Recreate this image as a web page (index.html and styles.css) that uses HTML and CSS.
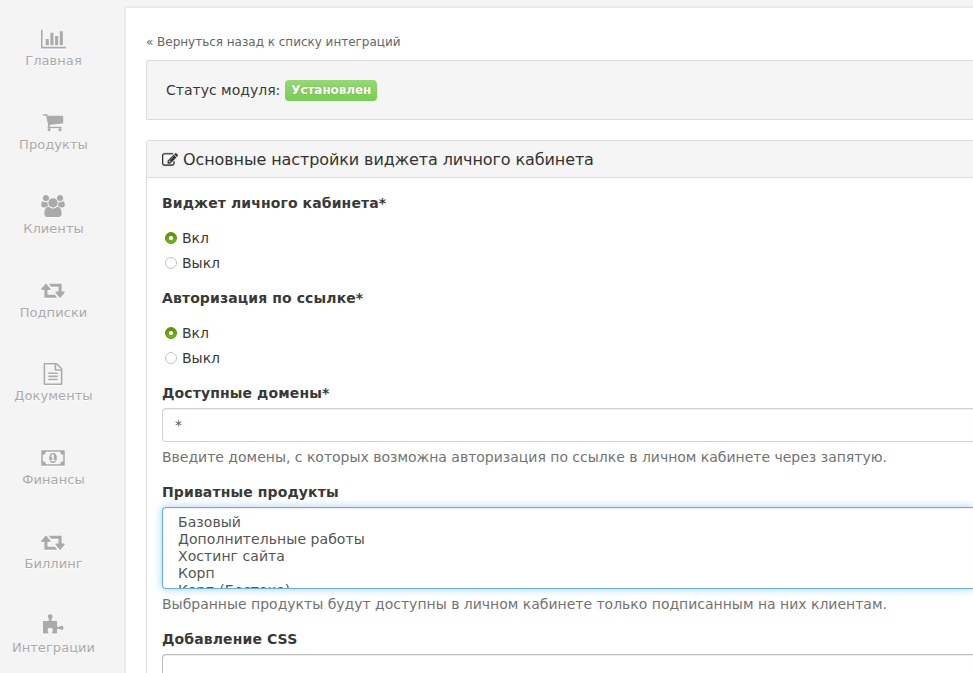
FILE: index.html
```
<!DOCTYPE html>
<html lang="ru">
<head>
<meta charset="utf-8">
<title>Настройки виджета</title>
<link rel="stylesheet" href="styles.css">
</head>
<body>
<nav class="sidebar">
  <a class="item"><svg class="ico ico-chart" viewBox="0 0 2048 1792"><path d="M640 896v512h-256v-512h256zm384-512v1024h-256v-1024h256zm1024 1152v128h-2048v-1536h128v1408h1920zm-640-896v768h-256v-768h256zm384-384v1152h-256v-1152h256z"/></svg><span>Главная</span></a>
  <a class="item"><svg class="ico" viewBox="0 0 1792 1792"><path d="M704 1536q0 52-38 90t-90 38-90-38-38-90 38-90 90-38 90 38 38 90zm896 0q0 52-38 90t-90 38-90-38-38-90 38-90 90-38 90 38 38 90zm128-1088v512q0 24-16.5 42.5t-40.5 21.5l-1044 122q13 60 13 70 0 16-24 64h920q26 0 45 19t19 45-19 45-45 19h-1024q-26 0-45-19t-19-45q0-11 8-31.5t16-36 21.5-40 15.5-29.5l-177-823h-204q-26 0-45-19t-19-45 19-45 45-19h256q16 0 28.5 6.5t19.5 15.5 13 24.5 8 26 5.5 29.5 4.5 26h1201q26 0 45 19t19 45z"/></svg><span>Продукты</span></a>
  <a class="item"><svg class="ico ico-wide" viewBox="64 0 1920 1792"><path d="M657 896q-162 5-265 128h-134q-82 0-138-40.5t-56-118.5q0-353 124-353 6 0 43.5 21t97.5 42.5 119 21.5q67 0 133-23-5 37-5 66 0 139 81 256zm1071 637q0 120-73 189.5t-194 69.5h-874q-121 0-194-69.5t-73-189.5q0-53 3.5-103.5t14-109 26.5-108.5 43-97.5 62-81 85.5-53.500 111.500-20q10 0 43 21.500t73 48 107 48 135 21.500 135-21.500 107-48 73-48 43-21.500q61 0 111.500 20t85.500 53.500 62 81 43 97.500 26.500 108.500 14 109 3.500 103.500zm-1024-1277q0 106-75 181t-181 75-181-75-75-181 75-181 181-75 181 75 75 181zm704 384q0 159-112.500 271.500t-271.500 112.500-271.500-112.500-112.500-271.500 112.500-271.500 271.500-112.500 271.500 112.500 112.500 271.500zm576 225q0 78-56 118.500t-138 40.500h-134q-103-123-265-128 81-117 81-256 0-29-5-66 66 23 133 23 59 0 119-21.500t97.500-42.500 43.500-21q124 0 124 353zm-128-609q0 106-75 181t-181 75-181-75-75-181 75-181 181-75 181 75 75 181z"/></svg><span>Клиенты</span></a>
  <a class="item"><svg class="ico ico-wide" viewBox="64 0 1920 1792"><path id="retweet" d="M1344 1504q0 13-9.5 22.5t-22.5 9.5h-960q-8 0-13.5-2t-9-7-5.5-8-3-11.5-1-11.5v-600h-192q-26 0-45-19t-19-45q0-24 15-41l320-384q19-22 49-22t49 22l320 384q15 17 15 41 0 26-19 45t-45 19h-192v384h576q16 0 25 11l160 192q7 10 7 21zm640-416q0 24-15 41l-320 384q-20 23-49 23t-49-23l-320-384q-15-17-15-41 0-26 19-45t45-19h192v-384h-576q-16 0-25-12l-160-192q-7-9-7-20 0-13 9.5-22.5t22.5-9.5h960q8 0 13.5 2t9 7 5.5 8 3 11.5 1 11.5v600h192q26 0 45 19t19 45z"/></svg><span>Подписки</span></a>
  <a class="item"><svg class="ico" viewBox="0 0 1792 1792"><path d="M1596 380q28 28 48 76t20 88v1152q0 40-28 68t-68 28h-1344q-40 0-68-28t-28-68v-1600q0-40 28-68t68-28h896q40 0 88 20t76 48zm-444-244v376h376q-10-29-22-41l-313-313q-12-12-41-22zm384 1528v-1024h-416q-40 0-68-28t-28-68v-416h-768v1536h1280zm-1024-864q0-14 9-23t23-9h704q14 0 23 9t9 23v64q0 14-9 23t-23 9h-704q-14 0-23-9t-9-23v-64zm736 224q14 0 23 9t9 23v64q0 14-9 23t-23 9h-704q-14 0-23-9t-9-23v-64q0-14 9-23t23-9h704zm0 256q14 0 23 9t9 23v64q0 14-9 23t-23 9h-704q-14 0-23-9t-9-23v-64q0-14 9-23t23-9h704z"/></svg><span>Документы</span></a>
  <a class="item"><svg class="ico ico-wide" viewBox="-64 0 1920 1792"><path d="M704 1152h384v-96h-128v-448h-114l-148 137 77 80q42-37 55-57h2v288h-128v96zm512-256q0 70-21 142t-59.500 134-101.500 101-138 39-138-39-101.500-101-59.500-134-21-142 21-142 59.500-134 101.500-101 138-39 138 39 101.500 101 59.500 134 21 142zm512 256v-512q-106 0-181-75t-75-181h-1152q0 106-75 181t-181 75v512q106 0 181 75t75 181h1152q0-106 75-181t181-75zm128-832v1152q0 26-19 45t-45 19h-1792q-26 0-45-19t-19-45v-1152q0-26 19-45t45-19h1792q26 0 45 19t19 45z"/></svg><span>Финансы</span></a>
  <a class="item"><svg class="ico ico-wide" viewBox="64 0 1920 1792"><use href="#retweet"/></svg><span>Биллинг</span></a>
  <a class="item"><svg class="ico" viewBox="0 1 22 22"><path d="M1 8H6.700V7.200Q7.300 5.900 6.200 4.700 5.400 3.600 6 2.500 6.700 1.300 8.200 1.300T10.400 2.500Q11 3.600 10.200 4.700 9.100 5.900 9.700 7.200V8H15V12.700Q15.300 14 16.700 13.900 17.600 13.800 18.400 13.100 19.500 12.400 20.500 13 21.600 13.600 21.600 14.900T20.500 16.700Q19.500 17.200 18.400 16.600 17.600 15.900 16.700 15.800 15.300 15.700 15 17V20.500H10.300Q9.700 19.500 10.500 18.300 11.300 17 10.400 15.800 9.700 15 8.200 15T6 15.800Q5.100 17 5.900 18.300 6.700 19.500 6 20.500H1Z"/></svg><span>Интеграции</span></a>
</nav>
<main class="page">
  <div class="content">
    <a class="back">« Вернуться назад к списку интеграций</a>
    <section class="status">Статус модуля: <b class="badge">Установлен</b></section>
    <section class="panel">
      <h1 class="title"><svg class="edit" viewBox="0 0 1792 1792"><path d="M888 1184l116-116-152-152-116 116v56h96v96h56zm440-720q-16-16-33 1l-350 350q-17 17-1 33t33-1l350-350q17-17 1-33zm80 594v190q0 119-84.500 203.500t-203.500 84.500h-832q-119 0-203.500-84.500t-84.500-203.500v-832q0-119 84.500-203.500t203.500-84.500h832q63 0 117 25 15 7 18 23 3 17-9 29l-49 49q-14 14-32 8-23-6-45-6h-832q-66 0-113 47t-47 113v832q0 66 47 113t113 47h832q66 0 113-47t47-113v-126q0-13 9-22l64-64q15-15 35-7t20 29zm-96-738l288 288-672 672h-288v-288zm444 132l-92 92-288-288 92-92q28-28 68-28t68 28l152 152q28 28 28 68t-28 68z"/></svg>Основные настройки виджета личного кабинета</h1>
      <div class="form">
        <div class="group">
          <div class="label">Виджет личного кабинета*</div>
          <div class="radios">
            <label class="radio"><i class="dot on"></i>Вкл</label>
            <label class="radio"><i class="dot"></i>Выкл</label>
          </div>
        </div>
        <div class="group">
          <div class="label">Авторизация по ссылке*</div>
          <div class="radios">
            <label class="radio"><i class="dot on"></i>Вкл</label>
            <label class="radio"><i class="dot"></i>Выкл</label>
          </div>
        </div>
        <div class="group">
          <div class="label">Доступные домены*</div>
          <div class="field">*</div>
          <div class="help">Введите домены, с которых возможна авторизация по ссылке в личном кабинете через запятую.</div>
        </div>
        <div class="group">
          <div class="label">Приватные продукты</div>
          <div class="list">
            <div>Базовый</div>
            <div>Дополнительные работы</div>
            <div>Хостинг сайта</div>
            <div>Корп</div>
            <div>Корп (Бостоко)</div>
          </div>
          <div class="help">Выбранные продукты будут доступны в личном кабинете только подписанным на них клиентам.</div>
        </div>
        <div class="group">
          <div class="label">Добавление CSS</div>
          <div class="field area"></div>
        </div>
      </div>
    </section>
  </div>
</main>
</body>
</html>
```
FILE: styles.css
```
* { box-sizing: border-box; }
body {
  margin: 0;
  height: 673px;
  overflow: hidden;
  display: flex;
  background: #f4f4f4;
  color: #393939;
  font: 14px/20px "DejaVu Sans", sans-serif;
}
.sidebar {
  flex: none;
  width: 124px;
  height: 673px;
  overflow: hidden;
  padding-top: 28px;
}
.item {
  display: flex;
  flex-direction: column;
  align-items: center;
  width: 107px;
  height: 83.85px;
  color: #aaa;
  font-size: 13px;
  line-height: 20px;
  letter-spacing: .06px;
  text-shadow: 0 1px 0 #fff;
}
.item span { margin-top: 1px; }
.ico {
  width: 22px;
  height: 22px;
  margin-right: 2px;
  fill: #aaa;
  filter: drop-shadow(0 1px 0 #fff);
}
.ico-wide { width: 24px; }
.ico-chart { width: 25px; margin-right: 0; }
.item:nth-child(n+2) .ico { margin-top: -1px; margin-bottom: 1px; }
.item:nth-child(5) .ico,
.item:nth-child(6) .ico,
.item:nth-child(7) .ico { margin-top: 0; margin-bottom: 0; }
.page {
  flex: 1;
  min-width: 0;
  height: 667px;
  overflow: hidden;
  margin-top: 6px;
  padding: 24px 0 0 20px;
  background: #fff;
  border: 2px solid #ebebeb;
  border-width: 2px 0 0 2px;
}
.back {
  display: block;
  height: 28px;
  font-size: 12px;
  letter-spacing: -.02px;
  color: #666;
}
.status {
  display: flex;
  height: 60px;
  padding: 19px;
  background: #f5f5f5;
  border: 1px solid #dcdcdc;
  border-right: 0;
  border-radius: 2px 0 0 2px;
}
.badge {
  height: 21px;
  margin-left: 5px;
  padding: 0 6px;
  border-radius: 4px;
  background: linear-gradient(#96d877, #78cd51);
  color: #fff;
  font-size: 12px;
  line-height: 21px;
  letter-spacing: -.08px;
  text-shadow: 0 0 2px rgba(0, 0, 0, .2);
}
.panel {
  margin-top: 20px;
  border: 1px solid #ddd;
  border-right: 0;
  border-radius: 4px 0 0 4px;
}
.title {
  display: flex;
  align-items: center;
  height: 37px;
  margin: 0;
  padding: 1px 15px 0;
  background: #f5f5f5;
  border-bottom: 1px solid #ddd;
  border-radius: 4px 0 0 0;
  font-size: 16px;
  font-weight: 400;
  letter-spacing: -.1px;
  white-space: nowrap;
  color: #333;
}
.edit {
  width: 16px;
  height: 16px;
  margin-right: 5px;
  fill: #333;
  stroke: #333;
  stroke-width: 30;
}
.form { padding: 15px 0 0 15px; }
.group { margin-bottom: 15px; }
.label {
  margin-bottom: 5px;
  font-weight: 700;
  letter-spacing: .11px;
}
.radios {
  display: flex;
  flex-direction: column;
  gap: 5px;
  padding-top: 10px;
}
.radio {
  display: flex;
  align-items: center;
  padding-left: 3px;
}
.dot {
  width: 12px;
  height: 12px;
  margin-right: 5px;
  border: 1px solid #c4c4c4;
  border-radius: 50%;
  background: #fff;
}
.dot.on {
  border-color: #5b9209;
  background: radial-gradient(circle, #fff 0 1.7px, transparent 2.4px), linear-gradient(#579000, #7bb52b);
}
.field {
  height: 34px;
  padding: 6px 12px;
  border: 1px solid #d2d2d2;
  border-right: 0;
  border-radius: 4px 0 0 4px;
  box-shadow: inset 0 1px 1px rgba(0, 0, 0, .075);
  color: #555;
}
.area {
  height: 100px;
  border-color: #bbb;
}
.list {
  height: 82px;
  padding: 6px 15px;
  overflow: hidden;
  border: 1px solid #66afe9;
  border-right: 0;
  border-radius: 4px 0 0 4px;
  box-shadow: inset 0 1px 1px rgba(0, 0, 0, .075), 0 0 8px rgba(102, 175, 233, .6);
  color: #555;
  line-height: 17px;
  letter-spacing: .06px;
}
.help {
  margin-top: 5px;
  color: #737373;
  letter-spacing: -.012px;
  white-space: nowrap;
}
```
